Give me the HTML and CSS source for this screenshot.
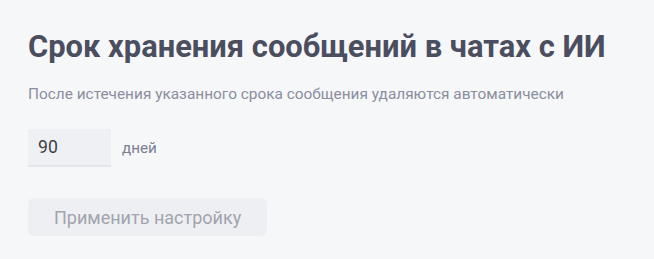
FILE: index.html
```html
<!DOCTYPE html>
<html lang="ru">
<head>
<meta charset="utf-8">
<link rel="stylesheet" href="styles.css">
</head>
<body>
<main class="panel">
  <h1 class="title">Срок хранения сообщений в чатах с ИИ</h1>
  <p class="desc">После истечения указанного срока сообщения удаляются автоматически</p>
  <div class="field">
    <input class="days-input" type="text" value="90">
    <span class="unit">дней</span>
  </div>
  <button class="apply" disabled>Применить настройку</button>
</main>
</body>
</html>
```
FILE: styles.css
```css
html, body {
  margin: 0;
  padding: 0;
  background: #f6f7f9;
  font-family: Roboto, "Liberation Sans", sans-serif;
}
.panel {
  padding: 28px 28px 0 28px;
  display: flex;
  flex-direction: column;
  align-items: flex-start;
}
.title {
  margin: 0;
  font-size: 30.9px;
  line-height: 38px;
  font-weight: 700;
  color: #4a4e5f;
}
.desc {
  margin: 17px 0 0 0;
  font-size: 15.4px;
  line-height: 22px;
  color: #8a8e9e;
}
.field {
  margin-top: 24px;
  display: flex;
  align-items: center;
  gap: 11px;
}
.days-input {
  box-sizing: border-box;
  width: 83px;
  height: 38px;
  padding: 0 10px;
  border: 0;
  border-bottom: 2px solid #e4e5e9;
  background: #eff0f3;
  font-family: inherit;
  font-size: 17.6px;
  color: #3c3f4a;
  outline: none;
}
.unit {
  font-size: 15.2px;
  color: #7b8091;
}
.apply {
  margin-top: 31px;
  box-sizing: border-box;
  height: 38px;
  padding: 0 26px;
  border: 0;
  border-radius: 6px;
  background: #eeeff2;
  color: #a1a4ad;
  font-family: inherit;
  font-size: 18px;
}
```
